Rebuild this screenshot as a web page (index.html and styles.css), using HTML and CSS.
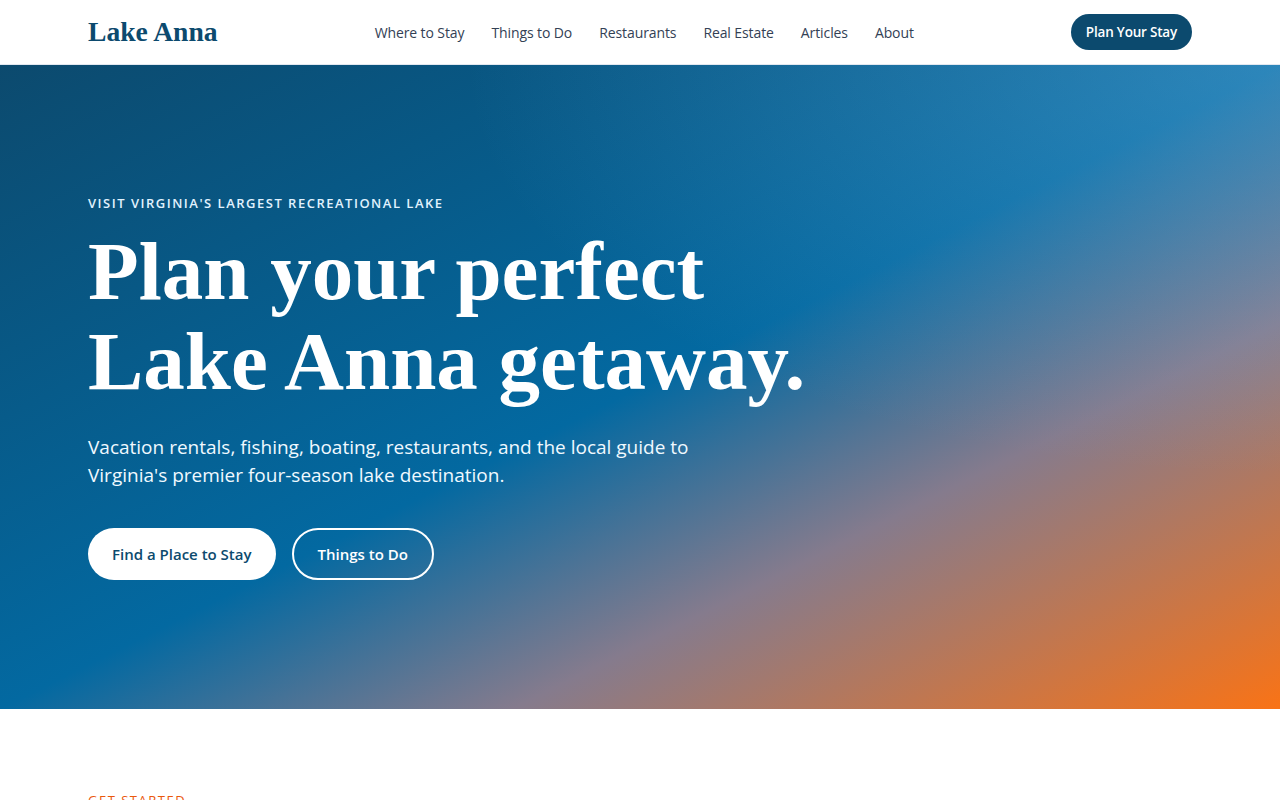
FILE: index.html
```html
<!DOCTYPE html>
<html lang="en">
<head>
<meta charset="utf-8">
<title>Lake Anna</title>
<link rel="stylesheet" href="styles.css">
</head>
<body>
<header class="site-header">
  <div class="container header-inner">
    <a class="logo" href="#">Lake Anna</a>
    <nav class="main-nav">
      <a href="#">Where to Stay</a>
      <a href="#">Things to Do</a>
      <a href="#">Restaurants</a>
      <a href="#">Real Estate</a>
      <a href="#">Articles</a>
      <a href="#">About</a>
    </nav>
    <a class="btn-header" href="#">Plan Your Stay</a>
  </div>
</header>
<section class="hero">
  <div class="container hero-inner">
    <p class="eyebrow">Visit Virginia's largest recreational lake</p>
    <h1 class="hero-title">Plan your perfect<br>Lake Anna getaway.</h1>
    <p class="hero-text">Vacation rentals, fishing, boating, restaurants, and the local guide to Virginia's premier four-season lake destination.</p>
    <div class="hero-actions">
      <a class="btn btn-solid" href="#">Find a Place to Stay</a>
      <a class="btn btn-outline" href="#">Things to Do</a>
    </div>
  </div>
</section>
<section class="start">
  <div class="container">
    <p class="section-eyebrow">Get started</p>
  </div>
</section>
</body>
</html>
```
FILE: styles.css
```css
* { box-sizing: border-box; }
html, body { margin: 0; padding: 0; }
body {
  font-family: "Open Sans", "Noto Sans", sans-serif;
  color: #1e293b;
  background: #fff;
}
a { text-decoration: none; color: inherit; }
p { margin: 0; }
.container {
  max-width: 1152px;
  margin: 0 auto;
  padding: 0 24px;
}
.site-header {
  height: 65px;
  border-bottom: 1px solid #e2e8f0;
  background: #fff;
}
.header-inner {
  height: 64px;
  display: flex;
  align-items: center;
  justify-content: space-between;
}
.logo {
  font-family: "Liberation Serif", Georgia, serif;
  font-weight: 700;
  font-size: 27.6px;
  color: #0c4a6e;
}
.main-nav {
  display: flex;
  gap: 27px;
}
.main-nav a {
  font-size: 14px;
  font-weight: 500;
  color: #334155;
  letter-spacing: -0.1px;
}
.btn-header {
  background: #0c4a6e;
  color: #fff;
  font-size: 13.5px;
  font-weight: 600;
  padding: 8px 15px;
  border-radius: 999px;
  line-height: 20px;
  letter-spacing: -0.2px;
}
.hero {
  height: 644px;
  background:
    radial-gradient(ellipse at 100% 0%, rgba(125, 190, 235, 0.35), rgba(125, 190, 235, 0) 45%),
    linear-gradient(to bottom right, #0c4a6e 0%, #0369a1 50%, #857b8d 70%, #f97316 100%);
  color: #fff;
}
.hero-inner {
  padding-top: 129px;
}
.eyebrow {
  font-size: 13px;
  font-weight: 600;
  letter-spacing: 1.5px;
  line-height: 18px;
  text-transform: uppercase;
  color: #e0f2fe;
}
.hero-title {
  font-family: "Liberation Serif", Georgia, serif;
  font-weight: 700;
  font-size: 83px;
  line-height: 90px;
  margin: 14px 0 0;
}
.hero-text {
  margin-top: 27px;
  max-width: 640px;
  font-size: 19px;
  line-height: 28px;
  color: #f0f9ff;
}
.hero-actions {
  display: flex;
  gap: 16px;
  margin-top: 39px;
}
.btn {
  display: inline-flex;
  align-items: center;
  height: 52px;
  padding: 0 24px;
  border-radius: 999px;
  font-size: 15px;
  font-weight: 600;
}
.btn-solid {
  background: #fff;
  color: #0c4a6e;
}
.btn-outline {
  border: 2px solid #fff;
  color: #fff;
}
.start {
  padding-top: 82px;
}
.section-eyebrow {
  font-size: 13px;
  font-weight: 500;
  letter-spacing: 1.5px;
  text-transform: uppercase;
  color: #ea580c;
}
```
